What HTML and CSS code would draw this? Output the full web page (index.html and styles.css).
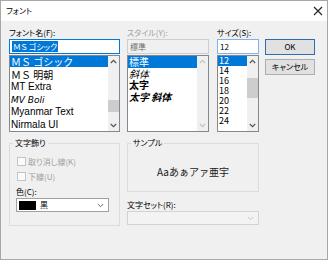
FILE: index.html
```html
<!DOCTYPE html>
<html lang="ja">
<head>
    <meta charset="UTF-8">
    <title>フォント</title>
    <link rel="stylesheet" href="styles.css">
</head>
<body>
    <div class="window">
        <div class="titlebar">
            <span class="title">フォント</span>
            <svg class="close" width="10" height="10" viewBox="0 0 10 10"><path d="M1 1L9 9M9 1L1 9" stroke="#222" stroke-width="1.1" fill="none"/></svg>
        </div>

        <div class="dialog">
            <!-- 上段: フォント名 / スタイル / サイズ / ボタン -->
            <div class="top">
                <div class="col col-font">
                    <div class="label">フォント名(F):</div>
                    <div class="edit focus"><span class="hl">ＭＳ ゴシック</span></div>
                    <div class="listbox">
                        <ul class="items font-items">
                            <li class="sel f-cjk">ＭＳ ゴシック</li>
                            <li class="f-cjk">ＭＳ 明朝</li>
                            <li class="f-latin">MT Extra</li>
                            <li class="f-mv">MV Boli</li>
                            <li class="f-latin">Myanmar Text</li>
                            <li class="f-latin">Nirmala UI</li>
                        </ul>
                        <div class="vscroll">
                            <span class="arrow"><svg width="7" height="5" viewBox="0 0 7 5"><path d="M0.8 4L3.5 1.3L6.2 4" stroke="#555" stroke-width="1.2" fill="none"/></svg></span>
                            <span class="track"><span class="thumb thumb-font"></span></span>
                            <span class="arrow"><svg width="7" height="5" viewBox="0 0 7 5"><path d="M0.8 1L3.5 3.7L6.2 1" stroke="#555" stroke-width="1.2" fill="none"/></svg></span>
                        </div>
                    </div>
                </div>

                <div class="col col-style">
                    <div class="label disabled">スタイル(Y):</div>
                    <div class="edit off">標準</div>
                    <div class="listbox">
                        <ul class="items style-items">
                            <li class="sel">標準</li>
                            <li class="italic">斜体</li>
                            <li class="bold">太字</li>
                            <li class="bold italic">太字 斜体</li>
                        </ul>
                        <div class="vscroll off">
                            <span class="arrow"><svg width="7" height="5" viewBox="0 0 7 5"><path d="M0.8 4L3.5 1.3L6.2 4" stroke="#c4c4c4" stroke-width="1.2" fill="none"/></svg></span>
                            <span class="track"></span>
                            <span class="arrow"><svg width="7" height="5" viewBox="0 0 7 5"><path d="M0.8 1L3.5 3.7L6.2 1" stroke="#c4c4c4" stroke-width="1.2" fill="none"/></svg></span>
                        </div>
                    </div>
                </div>

                <div class="col col-size">
                    <div class="label">サイズ(S):</div>
                    <div class="edit hover">12</div>
                    <div class="listbox">
                        <ul class="items size-items">
                            <li class="sel">12</li>
                            <li>14</li>
                            <li>16</li>
                            <li>18</li>
                            <li>20</li>
                            <li>22</li>
                            <li>24</li>
                        </ul>
                        <div class="vscroll">
                            <span class="arrow"><svg width="7" height="5" viewBox="0 0 7 5"><path d="M0.8 4L3.5 1.3L6.2 4" stroke="#555" stroke-width="1.2" fill="none"/></svg></span>
                            <span class="track"><span class="thumb thumb-size"></span></span>
                            <span class="arrow"><svg width="7" height="5" viewBox="0 0 7 5"><path d="M0.8 1L3.5 3.7L6.2 1" stroke="#555" stroke-width="1.2" fill="none"/></svg></span>
                        </div>
                    </div>
                </div>

                <div class="buttons">
                    <button class="btn default">OK</button>
                    <button class="btn">キャンセル</button>
                </div>
            </div>

            <!-- 下段: 文字飾り / サンプル / 文字セット -->
            <div class="bottom">
                <fieldset class="group effects">
                    <legend>文字飾り</legend>
                    <div class="check"><span class="box"></span>取り消し線(K)</div>
                    <div class="check"><span class="box"></span>下線(U)</div>
                    <div class="label color-label">色(C):</div>
                    <div class="combo">
                        <span class="swatch"></span>
                        <span class="combo-text">黒</span>
                        <svg class="chevron" width="7" height="5" viewBox="0 0 7 5"><path d="M0.8 1L3.5 3.7L6.2 1" stroke="#666" stroke-width="1" fill="none"/></svg>
                    </div>
                </fieldset>

                <div class="right">
                    <fieldset class="group sample">
                        <legend>サンプル</legend>
                        <div class="sample-text">Aaあぁアァ亜宇</div>
                    </fieldset>
                    <div class="label charset-label">文字セット(R):</div>
                    <div class="combo off">
                        <span class="combo-text"></span>
                        <svg class="chevron" width="7" height="5" viewBox="0 0 7 5"><path d="M0.8 1L3.5 3.7L6.2 1" stroke="#c4c4c4" stroke-width="1" fill="none"/></svg>
                    </div>
                </div>
            </div>
        </div>
    </div>
</body>
</html>
```

FILE: styles.css
```css
body {
    margin: 0;
    font-family: "Noto Sans CJK JP", sans-serif;
    font-size: 8px;
    font-feature-settings: "palt";
    color: #000;
    background: #fff;
}
.window {
    width: 328px;
    height: 260px;
    box-sizing: border-box;
    border: 1px solid #a8a8a8;
    background: #f0f0f0;
}
.titlebar {
    height: 20px;
    background: #fff;
    display: flex;
    align-items: center;
    justify-content: space-between;
    padding: 0 4px 0 5px;
}
.title {
    line-height: 12px;
}
.dialog {
    padding: 6px 0 0 8px;
}
.top {
    display: flex;
}
.col-font {
    width: 111px;
}
.col-style {
    width: 82px;
    margin-left: 7px;
}
.col-size {
    width: 42px;
    margin-left: 8px;
}
.label {
    height: 12px;
    line-height: 12px;
}
.disabled {
    color: #a0a0a0;
}
.edit {
    height: 15px;
    box-sizing: border-box;
    border: 1px solid #7a7a7a;
    background: #fff;
    margin-bottom: 1px;
    padding: 0 2px;
    line-height: 13px;
}
.edit.focus {
    border-color: #0078d7;
    padding: 1px 2px;
    line-height: 11px;
}
.edit.hover {
    border-color: #7eb4ea;
}
.edit.off {
    background: #f0f0f0;
    border-color: #cfcfcf;
    color: #6d6d6d;
}
.hl {
    display: inline-block;
    background: #0078d7;
    color: #fff;
    padding: 0 1px;
}
.listbox {
    height: 77px;
    box-sizing: border-box;
    border: 1px solid #828790;
    background: #fff;
    display: flex;
}
.items {
    list-style: none;
    margin: 0;
    padding: 0;
    flex: 1;
    overflow: hidden;
    white-space: nowrap;
}
.items li {
    padding-left: 1px;
}
.items li.sel {
    background: #0078d7;
    color: #fff;
}
.font-items li {
    height: 12.5px;
    line-height: 12.5px;
    font-size: 10px;
}
.font-items li.sel {
    height: 11px;
    line-height: 11px;
    margin-bottom: 1.5px;
}
.f-cjk {
    font-feature-settings: normal;
}
.f-latin {
    font-family: "Liberation Sans", sans-serif;
}
.f-mv {
    font-family: "DejaVu Sans", sans-serif;
    font-style: italic;
    font-size: 9px !important;
}
.style-items li {
    height: 11.5px;
    line-height: 11.5px;
    font-size: 10px;
}
.style-items .italic {
    font-style: italic;
}
.style-items .bold {
    font-weight: bold;
}
.size-items li {
    height: 10px;
    line-height: 10px;
    font-size: 9px;
}
.vscroll {
    width: 11px;
    display: flex;
    flex-direction: column;
    background: #f0f0f0;
}
.arrow {
    height: 11px;
    display: flex;
    align-items: center;
    justify-content: center;
}
.track {
    flex: 1;
}
.thumb {
    display: block;
    background: #cdcdcd;
}
.thumb-font {
    margin-top: 33px;
    height: 12px;
}
.thumb-size {
    margin-top: 11px;
    height: 20px;
}
.buttons {
    margin-left: 6px;
    width: 50px;
    padding-top: 12px;
    display: flex;
    flex-direction: column;
    gap: 4px;
}
.btn {
    height: 16px;
    padding: 0;
    border: 1px solid #adadad;
    background: #e1e1e1;
    font-family: inherit;
    font-size: 8px;
    font-feature-settings: "palt";
    color: #000;
    line-height: 14px;
}
.btn.default {
    border-color: #2b6fae;
}
.bottom {
    display: flex;
    margin-top: 6px;
}
.group {
    margin: 0;
    padding: 0;
    min-width: 0;
    border: 1px solid #dcdcdc;
}
.group legend {
    margin-left: 3px;
    padding: 0 2px;
    line-height: 10px;
}
.effects {
    width: 111px;
    box-sizing: border-box;
    padding-bottom: 13px;
}
.check {
    height: 15px;
    display: flex;
    align-items: center;
    gap: 2px;
    padding-left: 7px;
    color: #a0a0a0;
}
.check:first-of-type {
    margin-top: 6px;
}
.box {
    width: 9px;
    height: 9px;
    box-sizing: border-box;
    border: 1px solid #c4c4c4;
    background: #fbfbfb;
}
.color-label {
    margin: 2px 0 0 6px;
}
.combo {
    height: 14px;
    box-sizing: border-box;
    border: 1px solid #a0a0a0;
    background: #fff;
    display: flex;
    align-items: center;
    padding: 0 4px 0 2px;
}
.effects .combo {
    margin: 0 10px 0 6px;
}
.swatch {
    width: 17px;
    height: 9px;
    background: #000;
}
.combo-text {
    flex: 1;
    padding-left: 4px;
    line-height: 12px;
}
.combo.off {
    border-color: #d3d3d3;
    background: #f3f3f3;
}
.right {
    width: 132px;
    margin-left: 7px;
}
.sample {
    width: 132px;
    box-sizing: border-box;
}
.sample-text {
    height: 43px;
    box-sizing: border-box;
    padding-top: 4px;
    display: flex;
    align-items: center;
    justify-content: center;
    font-size: 10px;
    font-feature-settings: normal;
    color: #1a1a1a;
}
.charset-label {
    margin-top: 7px;
}
```
